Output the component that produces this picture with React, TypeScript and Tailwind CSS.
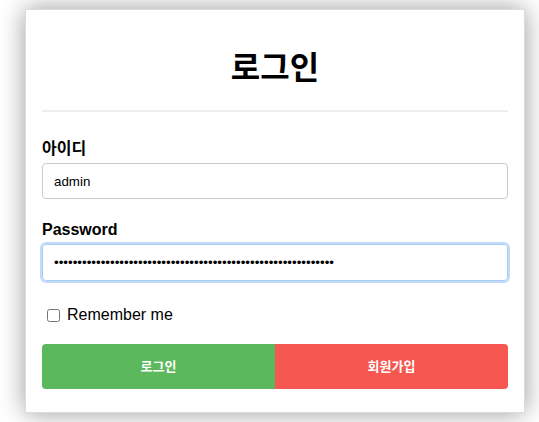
import { useEffect, useRef } from "react"

export default function App() {
  const pwRef = useRef<HTMLInputElement>(null)

  useEffect(() => {
    const el = pwRef.current
    if (el) {
      el.focus()
      el.setSelectionRange(el.value.length, el.value.length)
    }
  }, [])

  return (
    <div
      className="min-h-screen bg-white pt-[9px] pl-[25px]"
      style={{ fontFamily: '"Liberation Sans", "Noto Sans CJK KR", sans-serif' }}
    >
      <div className="w-[500px] bg-white border border-[#dcdcdc] shadow-[0_0_24px_rgba(0,0,0,0.4)] px-[16px] pt-[38px] pb-[23px]">
        <h1 className="text-center text-[32px] leading-[40px] font-semibold text-black">로그인</h1>
        <div className="mt-[22px] h-[2px] bg-[#eeeeee]" />

        <label className="block mt-[27px] text-[16px] leading-[20px] font-semibold text-black">아이디</label>
        <input
          type="text"
          defaultValue="admin"
          className="mt-[4px] block w-full h-[36px] px-[11px] border border-[#cccccc] rounded-[4px] text-[13.33px] text-black outline-none"
        />

        <label className="block mt-[21px] text-[16px] leading-[20px] font-bold text-black">Password</label>
        <input
          ref={pwRef}
          type="password"
          defaultValue={"x".repeat(60)}
          className="mt-[4px] block w-full h-[37px] px-[11px] border border-[#a8cdf5] rounded-[4px] text-[13.33px] text-black outline-none shadow-[0_0_0_2px_#c2dcf8]"
        />

        <div className="mt-[24px] flex items-center h-[20px]">
          <input type="checkbox" className="ml-[5px] w-[13px] h-[13px] m-0" />
          <span className="ml-[7px] text-[16px] text-black">Remember me</span>
        </div>

        <div className="mt-[19px] flex h-[45px]">
          <button className="flex-1 bg-[#5cb85c] text-white text-[13px] font-semibold rounded-l-[4px]">로그인</button>
          <button className="flex-1 bg-[#f65750] text-white text-[13px] font-semibold rounded-r-[4px]">회원가입</button>
        </div>
      </div>
    </div>
  )
}
